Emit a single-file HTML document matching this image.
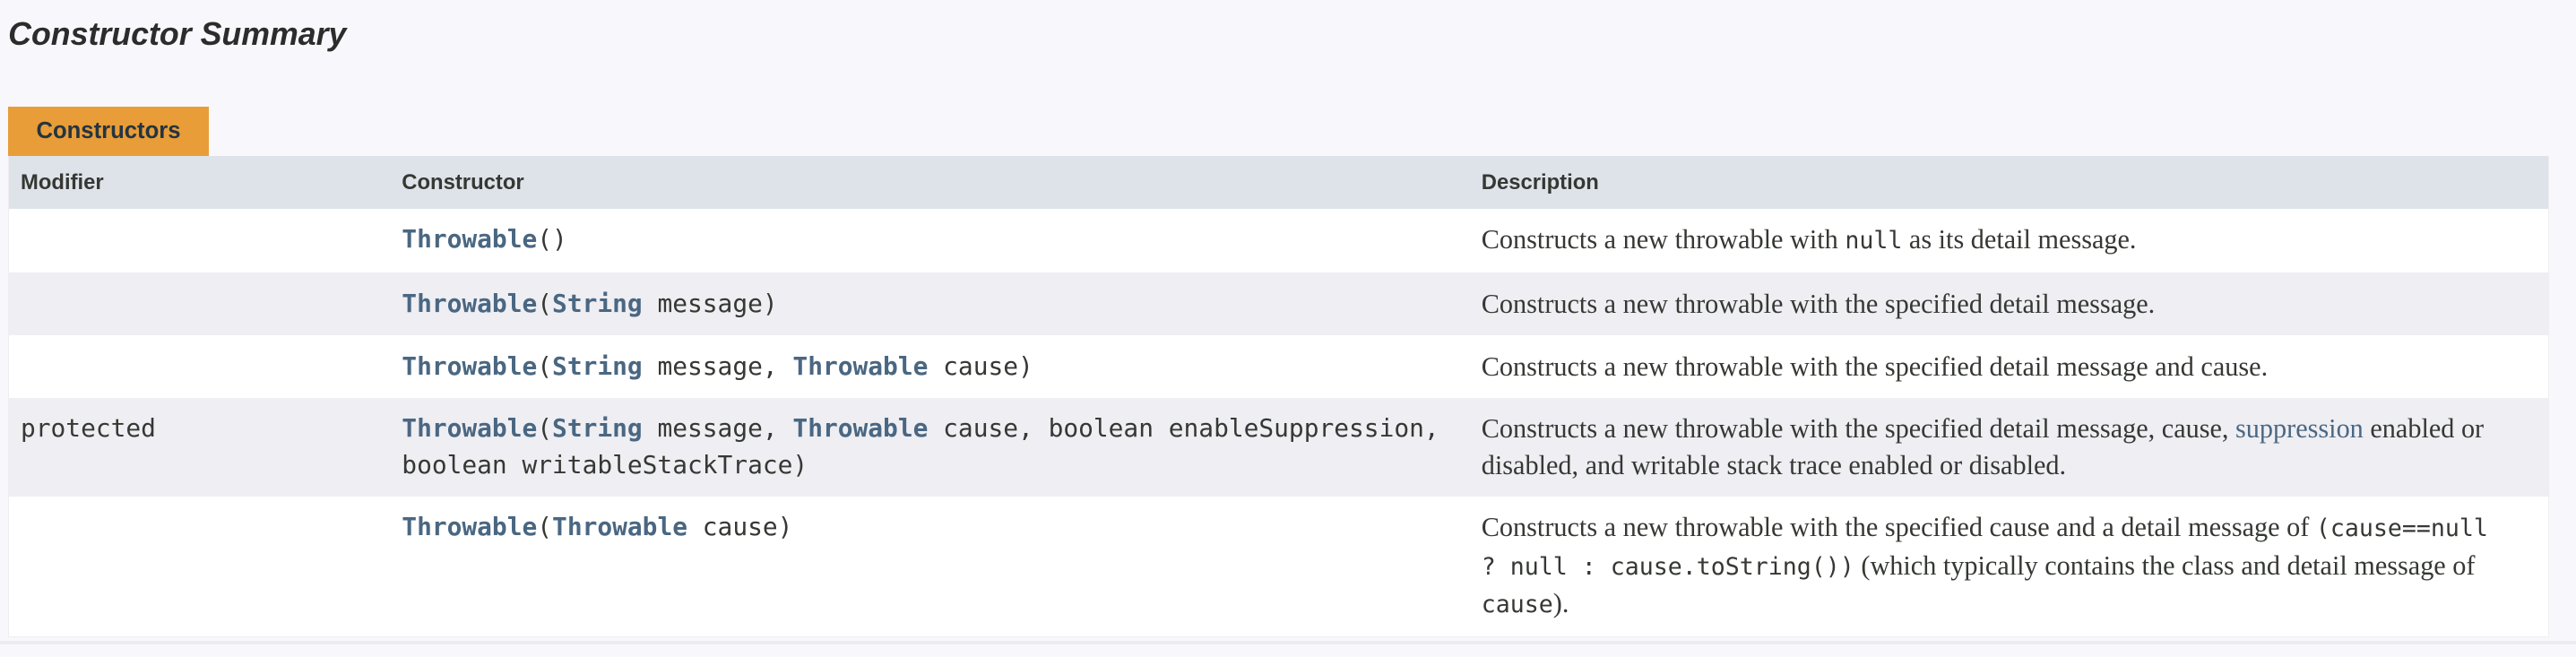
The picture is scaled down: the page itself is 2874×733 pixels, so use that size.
<!DOCTYPE html>
<html><head><meta charset="utf-8"><style>
html{zoom:1.8333;}
body{margin:0;background:#f8f8fc;color:#353833;font-family:"Liberation Sans",sans-serif;font-size:14px;width:1568px;height:400px;overflow:hidden;}
h3{font-style:italic;font-weight:bold;font-size:19.5px;margin:0;position:absolute;left:5px;top:10px;color:#2c2c2c;}
.tab{position:absolute;left:5px;top:65px;width:122px;height:30px;background:#e89d38;font-weight:bold;font-size:14px;line-height:30px;text-align:center;color:#253441;}
.tbl{position:absolute;left:5px;top:95px;width:1545px;border:1px solid #eeeef2;border-top:0;display:grid;grid-template-columns:232px 657px 1fr;}
.tbl>div{padding:8px 7px;line-height:22px;}
.h{background:#dee3e9;font-weight:bold;font-size:13px;line-height:16px!important;}
.w{background:#fff}.g{background:#eeeef3}
.m{font-family:"DejaVu Sans Mono","Liberation Mono",monospace;font-size:15.2px;}
.d{font-family:"Liberation Serif",serif;font-size:16.5px;padding-right:20px!important;}
.d code{font-family:"DejaVu Sans Mono",monospace;font-size:14.5px;}
a{color:#4a6782;text-decoration:none}
b.l{color:#4a6782}
.line{position:absolute;left:0;top:390px;width:1568px;height:2px;background:#ececf0;}
</style></head><body>
<h3>Constructor Summary</h3>
<div class="tab">Constructors</div>
<div class="tbl">
<div class="h">Modifier</div><div class="h">Constructor</div><div class="h">Description</div>
<div class="w"></div><div class="w m"><b class="l">Throwable</b>()</div><div class="w d">Constructs a new throwable with <code>null</code> as its detail message.</div>
<div class="g"></div><div class="g m"><b class="l">Throwable</b>(<b class="l">String</b> message)</div><div class="g d">Constructs a new throwable with the specified detail message.</div>
<div class="w"></div><div class="w m"><b class="l">Throwable</b>(<b class="l">String</b> message, <b class="l">Throwable</b> cause)</div><div class="w d">Constructs a new throwable with the specified detail message and cause.</div>
<div class="g m">protected</div><div class="g m"><b class="l">Throwable</b>(<b class="l">String</b> message, <b class="l">Throwable</b> cause, boolean enableSuppression, boolean writableStackTrace)</div><div class="g d">Constructs a new throwable with the specified detail message, cause, <a>suppression</a> enabled or disabled, and writable stack trace enabled or disabled.</div>
<div class="w"></div><div class="w m"><b class="l">Throwable</b>(<b class="l">Throwable</b> cause)</div><div class="w d">Constructs a new throwable with the specified cause and a detail message of <code>(cause==null ? null : cause.toString())</code> (which typically contains the class and detail message of <code>cause</code>).</div>
</div>
<div class="line"></div>
</body></html>
